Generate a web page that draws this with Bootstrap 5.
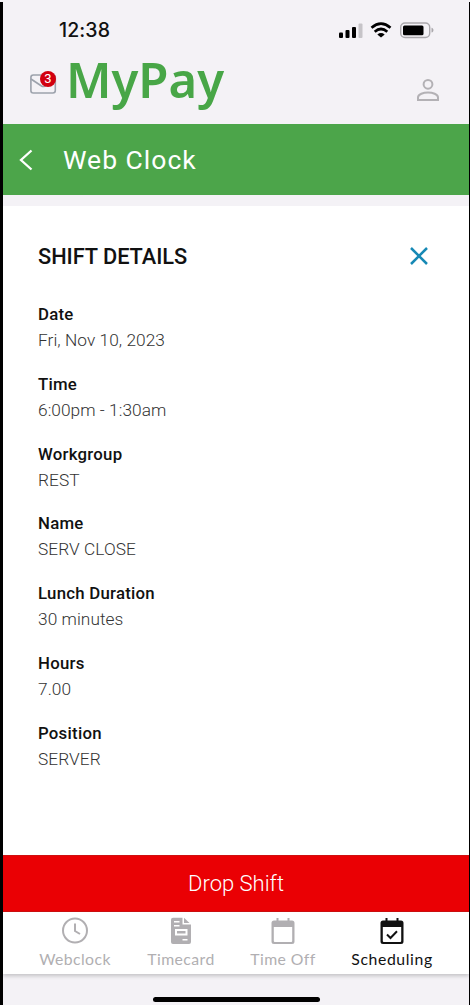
<!DOCTYPE html>
<html lang="en">
<head>
<meta charset="utf-8">
<meta name="viewport" content="width=device-width, initial-scale=1">
<title>MyPay - Web Clock</title>
<link href="https://cdn.jsdelivr.net/npm/bootstrap@5.3.0/dist/css/bootstrap.min.css" rel="stylesheet">
<style>
body{background:#f4f2f6;font-family:Roboto,"Liberation Sans",sans-serif;color:#111;overflow:hidden}
svg{display:block;flex:none}
.phone{height:1003px;margin-top:2px;border-left:3px solid #000;border-right:1px solid #000}
.status{height:56px;padding:0 34px 0 56px}
.clock{font:500 19.5px/1 Inter,sans-serif;letter-spacing:.1px;padding-top:2px}
.brandrow{height:66px;padding:0 29px 0 27px}
.mail{width:28px;height:28px;margin-top:-13px}
.user{margin-top:-3px}
.count{left:10px;top:0;width:16px;height:16px;background:#d2000f;font-size:13px;line-height:16px}
.logo{font:600 49px/1 "Noto Sans",sans-serif;color:#48a647;margin:-23px 0 0 8px;letter-spacing:0}
.titlebar{height:71px;background:#4ca54a;padding-left:16px}
.titlebar h1{font-size:26.500px;letter-spacing:1px;margin:1px 0 0 30px;line-height:1}
.sheet{margin-top:11px;height:649px;padding:38px 40px 0 35px}
.sheet h2{font-size:21.800px;font-weight:500;line-height:26px;letter-spacing:-.05px}
.details{margin-top:31px}
.details dt{font-size:16.800px;font-weight:500;line-height:26px;letter-spacing:.25px}
.details dd{font-size:17.300px;font-weight:300;line-height:26px;margin-bottom:17.75px;letter-spacing:.05px;color:#333}
.drop{height:57px;background:#ea0004;border-top:1px solid #cf1010;border-bottom:1px solid #cf1010;font-size:22px;font-weight:300;line-height:1}
.tabs{height:62px;box-shadow:0 2px 4px #0003;padding:5px 0 0 25px}
.tabs a{flex:none;color:#b1afb2;font:400 15.800px/20px Lato,sans-serif;letter-spacing:.4px;text-decoration:none;gap:4px;width:94px}
.tabs a:nth-child(2){width:118px}
.tabs a:nth-child(3){width:86px}
.tabs a:nth-child(4){width:132px}
.tabs a.active{color:#111;letter-spacing:.6px}
.homebar{width:167px;height:5px;background:#000;margin:23px 0 0 150px}
</style>
</head>
<body>
<div class="phone">
<header>
<div class="status d-flex align-items-center justify-content-between">
<span class="clock">12:38</span>
<svg width="96" height="18" viewBox="0 0 96 18">
<rect x="0" y="11.500" width="4" height="5.500" rx="1"/><rect x="6.500" y="9" width="4" height="8" rx="1"/><rect x="13" y="6" width="4" height="11" rx="1"/><rect x="19.500" y="2.500" width="4" height="14.500" rx="1" fill="#c6c4c8"/>
<g fill="none" stroke="#000" stroke-width="2.700"><path d="M32.500 6.700q9.500-8.200 19 0M35.700 10.700q6.300-5.400 12.600 0"/></g><path d="M38.300 13.500q3.700-2.900 7.400 0L42 16.500z"/>
<rect x="61.700" y="2" width="29" height="14.500" rx="4.300" fill="none" stroke="#aaa8ac" stroke-width="1.400"/><rect x="64" y="4.500" width="20.500" height="9.700" rx="1.500"/><path d="M92.500 6.700c2.600.5 2.600 4.300 0 4.800z" fill="#aaa8ac"/>
</svg>
</div>
<div class="brandrow d-flex align-items-center justify-content-between">
<div class="d-flex align-items-center">
<div class="mail position-relative">
<svg width="28" height="28" viewBox="0 0 28 28" fill="none" stroke="#9ca2ac" stroke-width="1.600"><rect x=".9" y="4" width="24.400" height="18" rx="2.500"/><path d="M1 8l10.500 7q1.700 1 3.400 0L25 8"/></svg>
<span class="count position-absolute rounded-circle text-white text-center">3</span>
</div>
<span class="logo">MyPay</span>
</div>
<svg class="user" width="24" height="24" viewBox="0 0 24 24" fill="none" stroke="#b3b1b5" stroke-width="2"><circle cx="12" cy="6.300" r="4.400"/><path d="M2 22v-2.500c0-3.400 5.500-5 10-5s10 1.600 10 5V22z"/></svg>
</div>
<div class="titlebar d-flex align-items-center text-white">
<svg width="14" height="22" viewBox="0 0 14 22" fill="none" stroke="#fff" stroke-width="2.300"><path d="M12.500 1.500L2 11l10.500 9.500"/></svg>
<h1 class="fw-normal">Web Clock</h1>
</div>
</header>
<main class="sheet bg-white">
<div class="d-flex justify-content-between align-items-center">
<h2 class="mb-0">SHIFT DETAILS</h2>
<svg width="20" height="20" viewBox="0 0 20 20" stroke="#1789b5" stroke-width="2.500"><path d="M2 1l16 16M18 1L2 17"/></svg>
</div>
<dl class="details mb-0">
<dt>Date</dt><dd>Fri, Nov 10, 2023</dd>
<dt>Time</dt><dd>6:00pm - 1:30am</dd>
<dt>Workgroup</dt><dd>REST</dd>
<dt>Name</dt><dd>SERV CLOSE</dd>
<dt>Lunch Duration</dt><dd>30 minutes</dd>
<dt>Hours</dt><dd>7.00</dd>
<dt>Position</dt><dd>SERVER</dd>
</dl>
</main>
<button class="drop btn rounded-0 w-100 text-white d-block border-start-0 border-end-0">Drop Shift</button>
<nav class="tabs bg-white d-flex">
<a href="#" class="d-flex flex-column align-items-center"><svg width="28" height="28" viewBox="0 0 28 28" fill="none" stroke="currentColor" stroke-width="2"><circle cx="14" cy="13.500" r="12"/><path d="M14 6.500V14l5 3"/></svg>Webclock</a>
<a href="#" class="d-flex flex-column align-items-center"><svg width="28" height="28" viewBox="0 0 28 28" fill="currentColor"><path fill-rule="evenodd" d="M6 .8h9.500v6.700H24V25a2 2 0 0 1-2 2H6a2 2 0 0 1-2-2V2.800a2 2 0 0 1 2-2zM7 4v1.500h5.500V4zm0 4v1.500h5.500V8zm1 4v6.500h12.500V12zm2 2h8.500v2.500H10zM15.500 22v1.500h5V22z"/><path d="M17 .8v5.300h5.500z"/></svg>Timecard</a>
<a href="#" class="d-flex flex-column align-items-center"><svg width="28" height="28" viewBox="0 0 28 28"><path fill="currentColor" fill-rule="evenodd" d="M7.500 1h2v2.500h9V1h2v2.500H23a2.500 2.500 0 0 1 2.500 2.500v18.500A2.500 2.500 0 0 1 23 27H5a2.500 2.500 0 0 1-2.500-2.500V6A2.500 2.500 0 0 1 5 3.500h2.500zM4.800 10v14q0 1 1 1h16.400q1 0 1-1V10z"/></svg>Time Off</a>
<a href="#" class="active d-flex flex-column align-items-center"><svg width="28" height="28" viewBox="0 0 28 28"><path fill="currentColor" fill-rule="evenodd" d="M7.500 1h2v2.500h9V1h2v2.500H23a2.500 2.500 0 0 1 2.500 2.500v18.500A2.500 2.500 0 0 1 23 27H5a2.500 2.500 0 0 1-2.500-2.500V6A2.500 2.500 0 0 1 5 3.500h2.500zM4.800 10v14q0 1 1 1h16.400q1 0 1-1V10z"/><path d="M9 17.500l3.500 3.500 6.500-6.700" fill="none" stroke="currentColor" stroke-width="2"/></svg>Scheduling</a>
</nav>
<div class="homebar rounded-pill"></div>
</div>
<script src="https://cdn.jsdelivr.net/npm/bootstrap@5.3.0/dist/js/bootstrap.bundle.min.js"></script>
</body>
</html>
